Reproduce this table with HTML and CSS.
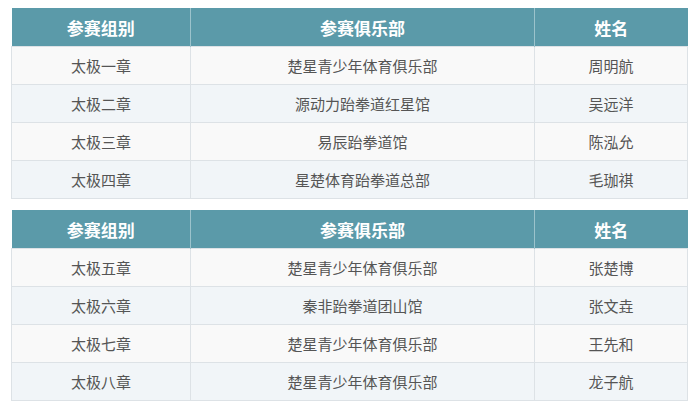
FILE: index.html
```html
<!DOCTYPE html>
<html lang="zh-CN">
<head>
<meta charset="utf-8">
<link rel="stylesheet" href="styles.css">
</head>
<body>
<div class="page">
  <table class="roster">
    <colgroup><col class="c1"><col class="c2"><col class="c3"></colgroup>
    <thead><tr><th>参赛组别</th><th>参赛俱乐部</th><th>姓名</th></tr></thead>
    <tbody>
      <tr><td>太极一章</td><td>楚星青少年体育俱乐部</td><td>周明航</td></tr>
      <tr><td>太极二章</td><td>源动力跆拳道红星馆</td><td>吴远洋</td></tr>
      <tr><td>太极三章</td><td>易辰跆拳道馆</td><td>陈泓允</td></tr>
      <tr><td>太极四章</td><td>星楚体育跆拳道总部</td><td>毛珈祺</td></tr>
    </tbody>
  </table>
  <table class="roster">
    <colgroup><col class="c1"><col class="c2"><col class="c3"></colgroup>
    <thead><tr><th>参赛组别</th><th>参赛俱乐部</th><th>姓名</th></tr></thead>
    <tbody>
      <tr><td>太极五章</td><td>楚星青少年体育俱乐部</td><td>张楚博</td></tr>
      <tr><td>太极六章</td><td>秦非跆拳道团山馆</td><td>张文垚</td></tr>
      <tr><td>太极七章</td><td>楚星青少年体育俱乐部</td><td>王先和</td></tr>
      <tr><td>太极八章</td><td>楚星青少年体育俱乐部</td><td>龙子航</td></tr>
    </tbody>
  </table>
</div>
</body>
</html>
```
FILE: styles.css
```css
html, body {
  margin: 0;
  padding: 0;
  background: #ffffff;
}
.page {
  padding: 8px 12px 0 11px;
  display: flex;
  flex-direction: column;
  gap: 11px;
  font-family: "Microsoft YaHei", "Noto Sans CJK SC", "Noto Sans", sans-serif;
}
.roster {
  width: 676px;
  border-collapse: collapse;
  table-layout: fixed;
}
.c1 { width: 179px; }
.c2 { width: 344px; }
.c3 { width: 153px; }
.roster th {
  height: 38px;
  padding: 0;
  background: #5b9aa9;
  color: #ffffff;
  font-size: 17px;
  font-weight: bold;
  text-align: center;
  border-left: 1px solid #9cc3cc;
}
.roster th:first-child { border-left: none; }
.roster td {
  height: 37px;
  padding: 0;
  text-align: center;
  font-size: 15px;
  color: #555555;
  border: 1px solid #dde2e6;
}
.roster tbody tr:nth-child(odd) td { background: #f9f9f9; }
.roster tbody tr:nth-child(even) td { background: #f1f5f8; }
```
